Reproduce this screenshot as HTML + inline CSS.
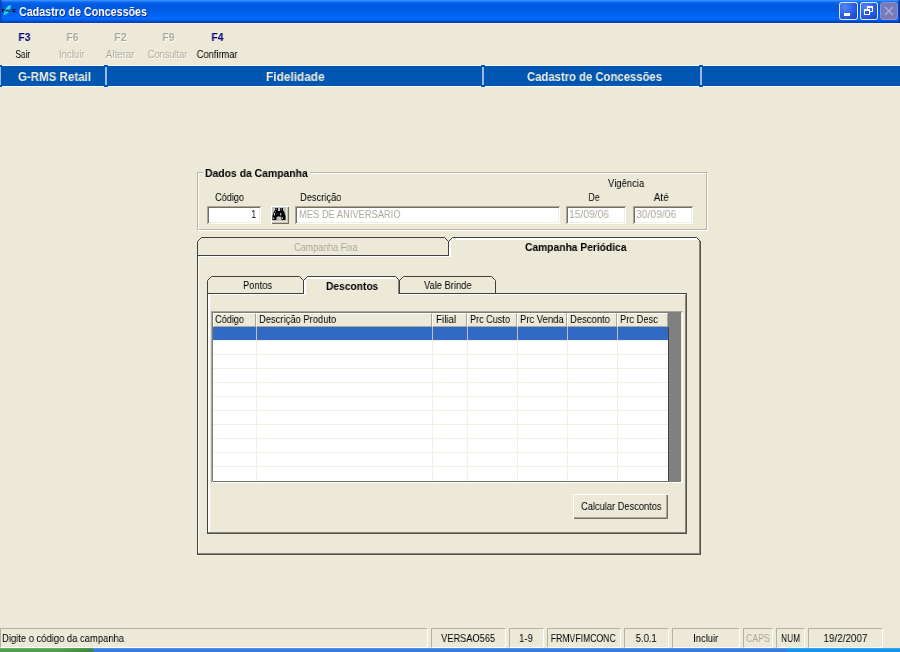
<!DOCTYPE html>
<html><head><meta charset="utf-8"><title>Cadastro de Concessões</title>
<style>
html,body{margin:0;padding:0;}
body{width:900px;height:652px;overflow:hidden;background:#ECE9D8;position:relative;font-family:"Liberation Sans",sans-serif;font-size:11px;color:#000;}
.a{position:absolute;box-sizing:border-box;}
.t{position:absolute;white-space:nowrap;display:block;will-change:transform;}
#title{left:0;top:0;width:900px;height:23px;background:linear-gradient(to bottom,#4A9EFF 0px,#2080FF 1px,#0560EA 3px,#0058E0 6px,#005AE2 10px,#0062F0 14px,#006AFF 18px,#0064F8 20px,#0048C8 21.5px,#0A3CAA 23px);}
#title:after{content:"";position:absolute;right:0;top:0;width:2px;height:23px;background:linear-gradient(to left,#0A2CA0,rgba(10,44,160,0.3));}
#title:before{content:"";position:absolute;left:0;top:0;width:3px;height:23px;background:linear-gradient(to right,#0A3CB4,rgba(10,60,180,0));}
.wb{top:2px;width:18px;height:18px;border:1px solid rgba(255,255,255,.85);border-radius:3px;background:radial-gradient(circle at 30% 25%,#5585F5 0%,#2A5CE4 55%,#1540C4 100%);}
.wb.x{background:#777BBA;border-color:#8E91C6;}
#hl{left:0;top:23px;width:900px;height:1px;background:#F3F0E3;}
#band{left:0;top:65px;width:900px;height:22px;background:#0056B0;border-top:1px solid #fff;border-bottom:1px solid #fff;}
.sep{top:65px;width:4px;height:22px;background:#0056B0;}
.sep:before{content:"";position:absolute;left:1px;top:2px;width:2px;height:18px;background:#9DB9DD;}
.sunk{background:#fff;box-shadow:inset 1px 1px 0 #ACA899,inset -1px -1px 0 #fff,inset 2px 2px 0 #716F64,inset -2px -2px 0 #F1EFE2;}
.gb{left:197px;top:172px;width:511px;height:59px;border:1px solid;border-color:#B8B5A5 #fff #fff #B8B5A5;}
.gb:before{content:"";position:absolute;left:0;top:0;right:0;bottom:0;border:1px solid;border-color:#fff #B8B5A5 #B8B5A5 #fff;}
.gbl{left:203px;top:166px;width:107px;height:14px;background:#ECE9D8;}
.btn3{background:#ECE9D8;box-shadow:inset 1px 1px 0 #fff,inset -1px -1px 0 #716F64,inset -2px -2px 0 #C8C5B5,inset 2px 2px 0 #F6F4EC;}
.btnx{background:#ECE9D8;box-shadow:inset 1px 1px 0 #fff,inset -1px -1px 0 #716F64,inset -2px -2px 0 #ACA899;}
.sp{top:628px;height:20px;border:1px solid;border-color:#B5B2A2 #fff #fff #B5B2A2;}
#grid{left:211px;top:311px;width:472px;height:172px;}
.hc{top:313px;height:14px;background:#ECE9D8;border:1px solid;border-color:#fff #ACA899 #ACA899 #fff;}
.vl{top:327px;width:1px;height:154px;background:#F1EFE3;}
.hl{left:213px;width:455px;height:1px;background:#F1EFE3;}
</style></head><body>
<div id="title" class="a"></div>
<svg class="a" style="left:0;top:0" width="18" height="22" viewBox="0 0 18 22">
<path d="M10.800 5 C7 5 4.500 9.500 3.600 15.200 C8 14.500 11.400 10 10.800 5Z" fill="#12D4E6"/>
<path d="M10.300 5.800 C8.500 7 7 9.500 5.500 13" stroke="#7FF0F8" stroke-width="0.700" fill="none"/>
<g fill="#0A0A14"><rect x="2" y="9" width="1.200" height="3"/><rect x="3.200" y="9" width="1" height="1"/>
<rect x="5.600" y="9.600" width="1" height="2.400"/><rect x="7.100" y="9.600" width="0.900" height="1.400"/><rect x="8.500" y="9.600" width="1" height="2.400"/>
<rect x="12" y="9.200" width="3.400" height="0.900"/><rect x="12.600" y="10.900" width="2.900" height="1.200"/></g>
</svg>
<div class="a wb" style="left:839px;width:19px"><div class="a" style="left:4px;top:10px;width:6px;height:3px;background:#fff"></div></div>
<div class="a wb" style="left:860px">
<div class="a" style="left:6px;top:3px;width:6px;height:6px;border:1px solid #fff;border-top-width:2px"></div>
<div class="a" style="left:3px;top:6px;width:6px;height:6px;border:1px solid #fff;border-top-width:2px;background:#2A5CE4"></div>
</div>
<div class="a wb x" style="left:880px"><svg class="a" style="left:0;top:0" width="16" height="16"><path d="M4 4 L12 12 M12 4 L4 12" stroke="#A8AAD4" stroke-width="1.600" fill="none"/></svg></div>
<div id="hl" class="a"></div>
<div id="band" class="a"></div>
<div class="a sep" style="left:-2px"></div>
<div class="a sep" style="left:104px"></div>
<div class="a sep" style="left:481px"></div>
<div class="a sep" style="left:699px"></div>

<!-- group box -->
<div class="a gb"></div><div class="a gbl"></div>
<div class="a sunk" style="left:207px;top:206px;width:54px;height:18px"></div>
<div class="a btn3" style="left:271px;top:206px;width:18px;height:18px">
<svg class="a" style="left:1px;top:1px" width="14" height="14" viewBox="0 0 14 14">
<rect x="0" y="0" width="14" height="14" fill="#C0C0C0"/>
<polygon points="3,1 6,1 6,4 8,4 8,1 11,1 11,3.500 12,4.500 12.500,6 13.500,9 13.500,13 9.500,13 9.500,10.500 8.500,9.500 5.500,9.500 4.500,10.500 4.500,13 0.500,13 0.500,9 1.500,6 2,4.500 3,3.500" fill="#000"/>
<rect x="3.700" y="1.600" width="1" height="1" fill="#fff"/><rect x="8.700" y="1.600" width="1" height="1" fill="#fff"/>
<rect x="2" y="6" width="0.800" height="2.500" fill="#fff"/><rect x="8.300" y="6" width="0.800" height="2.500" fill="#fff"/>
<rect x="1.300" y="10.500" width="0.800" height="1.500" fill="#fff"/><rect x="10.200" y="10.500" width="0.800" height="1.500" fill="#fff"/>
<rect x="3" y="4.500" width="0.800" height="0.800" fill="#ddd"/><rect x="5.500" y="6.500" width="1" height="1" fill="#666"/>
</svg></div>
<div class="a sunk" style="left:295px;top:206px;width:265px;height:18px"></div>
<div class="a sunk" style="left:566px;top:206px;width:60px;height:18px"></div>
<div class="a sunk" style="left:633px;top:206px;width:60px;height:18px"></div>

<!-- tab controls lines -->
<svg class="a" style="left:0;top:0" width="900" height="652" shape-rendering="crispEdges">
<g fill="none" stroke-width="1">
<!-- outer white highlights -->
<path d="M198.500 256.500H450.500 M198.500 257V554" stroke="#fff"/>
<path d="M450 242V257 M452 239H697" stroke="#fff" stroke-width="2"/>
<!-- outer right/bottom -->
<path d="M699.500 241V554 M198 553.500H700" stroke="#85837A"/>
<path d="M700.500 241V555 M197 554.500H701" stroke="#55534A"/>
<!-- outer dark -->
<path d="M197.500 554.500V241.500L201.500 237.500H444.500L448.500 241.500L452.500 237.500H696.500L700.500 241.500" stroke="#404040" shape-rendering="geometricPrecision"/>
<path d="M197 255.500H449 M448.500 241V256" stroke="#404040"/>
<!-- inner white -->
<path d="M208.500 294.500H304 M399 294.500H685" stroke="#fff"/>
<path d="M209 294V533" stroke="#fff" stroke-width="2"/>
<path d="M305 280V295 M307 278H396" stroke="#fff" stroke-width="2"/>
<!-- inner right/bottom -->
<path d="M685.500 295V533 M208 532.500H686 M398.500 280V294" stroke="#85837A"/>
<path d="M686.500 293V534 M207 533.500H687" stroke="#55534A"/>
<!-- inner dark -->
<path d="M207.500 533.500V280.500L211.500 276.500H299.500L303.500 280.500L307.500 276.500H395.500L399.500 280.500L403.500 276.500H491.500L495.500 280.500V293.500" stroke="#404040" shape-rendering="geometricPrecision"/>
<path d="M207 293.500H304 M303.500 280V294 M399.500 280V294 M399 293.500H687" stroke="#404040"/>
</g>
</svg>

<!-- grid -->
<div id="grid" class="a" style="background:#fff;border:solid;border-width:2px 2px 2px 2px;border-color:#807E72 #fff #fff #807E72;box-shadow:inset 0 0 0 0 #000"></div>
<div class="a" style="left:211px;top:311px;width:471px;height:1px;background:#ACA899"></div><div class="a" style="left:211px;top:311px;width:1px;height:171px;background:#ACA899"></div>
<div class="a" style="left:213px;top:481px;width:456px;height:1px;background:#716F64"></div>
<div class="a" style="left:681px;top:313px;width:1px;height:168px;background:#ECE9D8"></div>
<div class="a" style="left:668px;top:313px;width:13px;height:169px;background:#808080"></div>
<div class="a" style="left:668px;top:327px;width:1px;height:154px;background:#404040"></div>
<div class="a hc" style="left:213px;width:43px"></div>
<div class="a hc" style="left:256px;width:176px"></div>
<div class="a hc" style="left:432px;width:35px"></div>
<div class="a hc" style="left:467px;width:50px"></div>
<div class="a hc" style="left:517px;width:50px"></div>
<div class="a hc" style="left:567px;width:50px"></div>
<div class="a hc" style="left:617px;width:51px"></div>
<div class="a" style="left:213px;top:327px;width:455px;height:13px;background:#316AC5"></div>
<div class="a vl" style="left:256px"></div><div class="a vl" style="left:432px"></div><div class="a vl" style="left:467px"></div><div class="a vl" style="left:517px"></div><div class="a vl" style="left:567px"></div><div class="a vl" style="left:617px"></div>
<div class="a" style="left:256px;top:327px;width:1px;height:13px;background:#C0C0C0;box-shadow:176px 0 0 #C0C0C0,211px 0 0 #C0C0C0,261px 0 0 #C0C0C0,311px 0 0 #C0C0C0,361px 0 0 #C0C0C0"></div>
<div class="a hl" style="top:340px;box-shadow:0 14px 0 #F1EFE3,0 28px 0 #F1EFE3,0 42px 0 #F1EFE3,0 56px 0 #F1EFE3,0 70px 0 #F1EFE3,0 84px 0 #F1EFE3,0 98px 0 #F1EFE3,0 112px 0 #F1EFE3,0 126px 0 #F1EFE3"></div>

<div class="a btnx" style="left:573px;top:494px;width:95px;height:25px"></div>

<!-- status bar -->
<div class="a sp" style="left:0;width:428px"></div>
<div class="a sp" style="left:431px;width:75px"></div>
<div class="a sp" style="left:509px;width:35px"></div>
<div class="a sp" style="left:547px;width:74px"></div>
<div class="a sp" style="left:624px;width:45px"></div>
<div class="a sp" style="left:672px;width:68px"></div>
<div class="a sp" style="left:743px;width:30px"></div>
<div class="a sp" style="left:776px;width:29px"></div>
<div class="a sp" style="left:808px;width:75px"></div>
<!-- taskbar sliver -->
<div class="a" style="left:0;top:648px;width:900px;height:4px;background:linear-gradient(to bottom,#5C9CEE,#3C80E6 1.5px,#3478DE)"></div>
<div class="a" style="left:0;top:648px;width:94px;height:4px;background:linear-gradient(to right,rgba(0,0,0,0) 60%,rgba(0,60,0,.25)),linear-gradient(to bottom,#72B472,#55A257 1.5px,#4D9C50);border-radius:0 4px 0 0"></div>
<div class="a" style="left:787px;top:648px;width:113px;height:4px;background:linear-gradient(to bottom,#3AB0F6,#1896EC 1.5px,#1590E8)"></div>
<span class="t" style="left:18.80px;top:2.70px;font-size:13px;line-height:17px;font-weight:bold;color:#fff;transform:scaleX(0.8240);transform-origin:0 0;text-shadow:1px 1px 0 #0A2A80;">Cadastro de Concessões</span>
<span class="t" style="left:17.58px;top:30.09px;font-size:11px;line-height:15px;font-weight:bold;color:#000078;transform:scaleX(0.9343);transform-origin:50% 0;">F3</span>
<span class="t" style="left:65.58px;top:30.09px;font-size:11px;line-height:15px;font-weight:bold;color:#ACA899;transform:scaleX(0.9343);transform-origin:50% 0;text-shadow:1px 1px 0 #fff;">F6</span>
<span class="t" style="left:113.58px;top:30.09px;font-size:11px;line-height:15px;font-weight:bold;color:#ACA899;transform:scaleX(0.9732);transform-origin:50% 0;text-shadow:1px 1px 0 #fff;">F2</span>
<span class="t" style="left:162.08px;top:30.09px;font-size:11px;line-height:15px;font-weight:bold;color:#ACA899;transform:scaleX(0.9343);transform-origin:50% 0;text-shadow:1px 1px 0 #fff;">F9</span>
<span class="t" style="left:211.08px;top:30.09px;font-size:11px;line-height:15px;font-weight:bold;color:#000078;transform:scaleX(0.9343);transform-origin:50% 0;">F4</span>
<span class="t" style="left:13.42px;top:46.69px;font-size:11px;line-height:15px;color:#000;transform:scaleX(0.7514);transform-origin:50% 0;">Sair</span>
<span class="t" style="left:57.33px;top:46.69px;font-size:11px;line-height:15px;color:#ACA899;transform:scaleX(0.8758);transform-origin:50% 0;text-shadow:1px 1px 0 #fff;">Incluir</span>
<span class="t" style="left:104.10px;top:46.69px;font-size:11px;line-height:15px;color:#ACA899;transform:scaleX(0.8856);transform-origin:50% 0;text-shadow:1px 1px 0 #fff;">Alterar</span>
<span class="t" style="left:144.26px;top:46.69px;font-size:11px;line-height:15px;color:#ACA899;transform:scaleX(0.8390);transform-origin:50% 0;text-shadow:1px 1px 0 #fff;">Consultar</span>
<span class="t" style="left:192.85px;top:46.69px;font-size:11px;line-height:15px;color:#000;transform:scaleX(0.8448);transform-origin:50% 0;">Confirmar</span>
<span class="t" style="left:18.00px;top:68.84px;font-size:12px;line-height:16px;font-weight:bold;color:#EFEDDE;transform:scaleX(0.9603);transform-origin:0 0;">G-RMS Retail</span>
<span class="t" style="left:266.40px;top:68.84px;font-size:12px;line-height:16px;font-weight:bold;color:#EFEDDE;transform:scaleX(0.9875);transform-origin:0 0;">Fidelidade</span>
<span class="t" style="left:527.00px;top:68.84px;font-size:12px;line-height:16px;font-weight:bold;color:#EFEDDE;transform:scaleX(0.9415);transform-origin:0 0;">Cadastro de Concessões</span>
<span class="t" style="left:205.00px;top:165.69px;font-size:11px;line-height:15px;font-weight:bold;color:#000;transform:scaleX(0.9438);transform-origin:0 0;">Dados da Campanha</span>
<span class="t" style="left:215.00px;top:189.69px;font-size:11px;line-height:15px;color:#000;transform:scaleX(0.8319);transform-origin:0 0;">Código</span>
<span class="t" style="left:299.60px;top:189.69px;font-size:11px;line-height:15px;color:#000;transform:scaleX(0.8465);transform-origin:0 0;">Descrição</span>
<span class="t" style="left:608.30px;top:175.69px;font-size:11px;line-height:15px;color:#000;transform:scaleX(0.8619);transform-origin:0 0;">Vigência</span>
<span class="t" style="left:586.97px;top:189.69px;font-size:11px;line-height:15px;color:#000;transform:scaleX(0.7822);transform-origin:50% 0;">De</span>
<span class="t" style="left:652.74px;top:189.69px;font-size:11px;line-height:15px;color:#000;transform:scaleX(0.9082);transform-origin:50% 0;">Até</span>
<span class="t" style="left:249.88px;top:206.69px;font-size:11px;line-height:15px;color:#000;transform:scaleX(0.8163);transform-origin:100% 0;">1</span>
<span class="t" style="left:298.70px;top:206.69px;font-size:11px;line-height:15px;color:#ACA899;transform:scaleX(0.8472);transform-origin:0 0;">MES DE ANIVERSARIO</span>
<span class="t" style="left:569.00px;top:206.69px;font-size:11px;line-height:15px;color:#ACA899;transform:scaleX(0.9340);transform-origin:0 0;">15/09/06</span>
<span class="t" style="left:635.70px;top:206.69px;font-size:11px;line-height:15px;color:#ACA899;transform:scaleX(0.9410);transform-origin:0 0;">30/09/06</span>
<span class="t" style="left:293.60px;top:239.69px;font-size:11px;line-height:15px;color:#ACA899;transform:scaleX(0.8203);transform-origin:0 0;">Campanha Fixa</span>
<span class="t" style="left:524.70px;top:240.19px;font-size:11px;line-height:15px;font-weight:bold;color:#000;transform:scaleX(0.9327);transform-origin:0 0;">Campanha Periódica</span>
<span class="t" style="left:242.50px;top:277.69px;font-size:11px;line-height:15px;color:#000;transform:scaleX(0.8467);transform-origin:0 0;">Pontos</span>
<span class="t" style="left:325.70px;top:278.59px;font-size:11px;line-height:15px;font-weight:bold;color:#000;transform:scaleX(0.9298);transform-origin:0 0;">Descontos</span>
<span class="t" style="left:423.50px;top:277.69px;font-size:11px;line-height:15px;color:#000;transform:scaleX(0.8491);transform-origin:0 0;">Vale Brinde</span>
<span class="t" style="left:214.90px;top:311.69px;font-size:11px;line-height:15px;color:#000;transform:scaleX(0.8319);transform-origin:0 0;">Código</span>
<span class="t" style="left:259.00px;top:311.69px;font-size:11px;line-height:15px;color:#000;transform:scaleX(0.8541);transform-origin:0 0;">Descrição Produto</span>
<span class="t" style="left:435.50px;top:311.69px;font-size:11px;line-height:15px;color:#000;transform:scaleX(0.8840);transform-origin:0 0;">Filial</span>
<span class="t" style="left:470.30px;top:311.69px;font-size:11px;line-height:15px;color:#000;transform:scaleX(0.8282);transform-origin:0 0;">Prc Custo</span>
<span class="t" style="left:520.30px;top:311.69px;font-size:11px;line-height:15px;color:#000;transform:scaleX(0.8588);transform-origin:0 0;">Prc Venda</span>
<span class="t" style="left:570.30px;top:311.69px;font-size:11px;line-height:15px;color:#000;transform:scaleX(0.8605);transform-origin:0 0;">Desconto</span>
<span class="t" style="left:620.30px;top:311.69px;font-size:11px;line-height:15px;color:#000;transform:scaleX(0.8515);transform-origin:0 0;">Prc Desc</span>
<span class="t" style="left:580.60px;top:498.69px;font-size:11px;line-height:15px;color:#000;transform:scaleX(0.8451);transform-origin:0 0;">Calcular Descontos</span>
<span class="t" style="left:2.30px;top:630.89px;font-size:11px;line-height:15px;color:#000;transform:scaleX(0.8562);transform-origin:0 0;">Digite o código da campanha</span>
<span class="t" style="left:436.40px;top:630.89px;font-size:11px;line-height:15px;color:#000;transform:scaleX(0.8411);transform-origin:50% 0;">VERSAO565</span>
<span class="t" style="left:518.05px;top:630.89px;font-size:11px;line-height:15px;color:#000;transform:scaleX(0.8802);transform-origin:50% 0;">1-9</span>
<span class="t" style="left:542.25px;top:630.89px;font-size:11px;line-height:15px;color:#000;transform:scaleX(0.7879);transform-origin:50% 0;">FRMVFIMCONC</span>
<span class="t" style="left:634.27px;top:630.89px;font-size:11px;line-height:15px;color:#000;transform:scaleX(0.8582);transform-origin:50% 0;">5.0.1</span>
<span class="t" style="left:690.83px;top:630.89px;font-size:11px;line-height:15px;color:#000;transform:scaleX(0.8520);transform-origin:50% 0;">Incluir</span>
<span class="t" style="left:743.02px;top:630.89px;font-size:11px;line-height:15px;color:#ACA899;transform:scaleX(0.8008);transform-origin:50% 0;">CAPS</span>
<span class="t" style="left:777.97px;top:630.89px;font-size:11px;line-height:15px;color:#000;transform:scaleX(0.7581);transform-origin:50% 0;">NUM</span>
<span class="t" style="left:820.53px;top:630.89px;font-size:11px;line-height:15px;color:#000;transform:scaleX(0.8991);transform-origin:50% 0;">19/2/2007</span>
</body></html>
